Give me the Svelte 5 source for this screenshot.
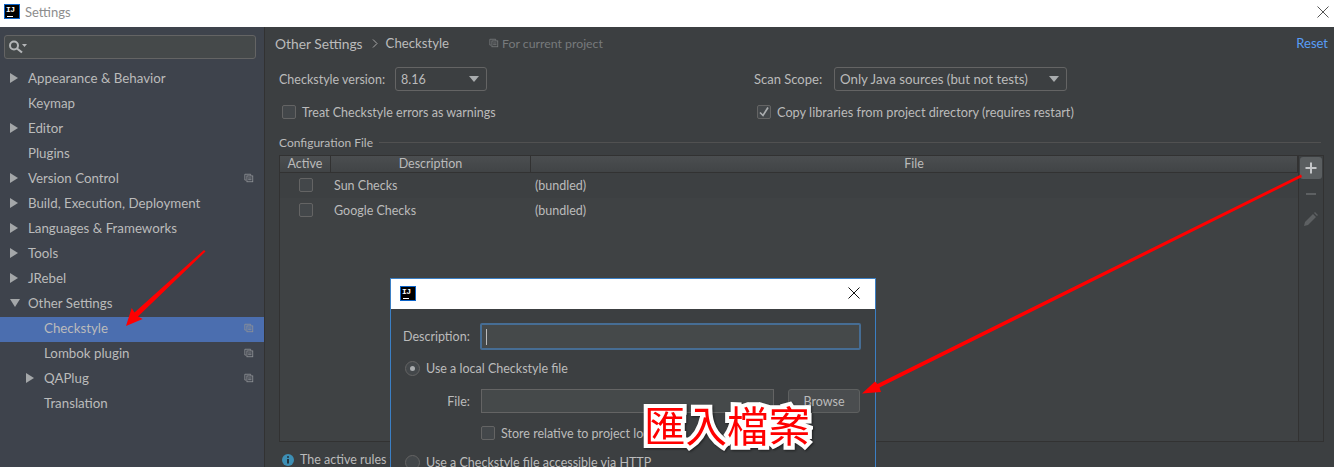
<script>
  // Settings window with the Checkstyle page, the "add file" dialog on top and the red annotations.
  const tree = [
    { label: 'Appearance & Behavior', arrow: 'right' },
    { label: 'Keymap' },
    { label: 'Editor', arrow: 'right' },
    { label: 'Plugins' },
    { label: 'Version Control', arrow: 'right', copy: true },
    { label: 'Build, Execution, Deployment', arrow: 'right' },
    { label: 'Languages & Frameworks', arrow: 'right' },
    { label: 'Tools', arrow: 'right' },
    { label: 'JRebel', arrow: 'right' },
    { label: 'Other Settings', arrow: 'down' },
    { label: 'Checkstyle', child: true, copy: true, selected: true },
    { label: 'Lombok plugin', child: true, copy: true },
    { label: 'QAPlug', child: true, arrow: 'right', copy: true },
    { label: 'Translation', child: true }
  ];
  const rules = [
    { name: 'Sun Checks', file: '(bundled)' },
    { name: 'Google Checks', file: '(bundled)' }
  ];
</script>

{#snippet logo()}
  <span class="logo"><span class="logo-text">IJ</span><i></i></span>
{/snippet}

{#snippet copyIcon()}
  <svg class="copy" width="10" height="10" viewBox="0 0 12 12" fill="none" stroke="currentColor">
    <path d="M2.5 8.5h-1.5v-7h7v1.5" />
    <rect x="3.5" y="3.5" width="7" height="7" />
    <path d="M5 6h4M5 8h4" />
  </svg>
{/snippet}

{#snippet caret()}
  <svg class="caret" width="10" height="6" viewBox="0 0 10 6"><path d="M0 0h10L5 6z" fill="#a9acae" /></svg>
{/snippet}

<div class="window">
  <header class="titlebar">
    {@render logo()}
    <span class="title">Settings</span>
    <svg class="close main-close" width="12" height="12" viewBox="0 0 12 12"><path d="M.5.5l11 11M11.5.5l-11 11" stroke="#555" fill="none" /></svg>
  </header>

  <div class="body">
    <aside class="sidebar">
      <div class="search">
        <svg width="18" height="14" viewBox="0 0 18 14" fill="none">
          <circle cx="5" cy="5.5" r="4" stroke="#b4b6b8" stroke-width="2" />
          <path d="M8 8.5l5 4" stroke="#b4b6b8" stroke-width="2.2" />
          <path d="M13 4h5l-2.500 3z" fill="#b4b6b8" />
        </svg>
      </div>
      <ul class="tree">
        {#each tree as item}
          <li class:selected={item.selected} class:child={item.child}>
            <span class="arrow-slot">
              {#if item.arrow === 'right'}
                <svg width="9" height="10" viewBox="0 0 9 10"><path d="M0 0l8 5-8 5z" fill="#a4a7a9" /></svg>
              {:else if item.arrow === 'down'}
                <svg width="10" height="9" viewBox="0 0 10 9"><path d="M0 0h10L5 8z" fill="#a4a7a9" /></svg>
              {/if}
            </span>
            <span class="tree-label">{item.label}</span>
            {#if item.copy}{@render copyIcon()}{/if}
          </li>
        {/each}
      </ul>
    </aside>

    <main class="page">
      <div class="crumbs">
        <span>Other Settings</span>
        <svg width="6" height="9" viewBox="0 0 6 9" fill="none"><path d="M1 .5l4 4-4 4" stroke="#a8a8a8" /></svg>
        <span class="crumb-last">Checkstyle</span>
        <span class="scope">{@render copyIcon()}For current project</span>
        <span class="reset">Reset</span>
      </div>

      <div class="options">
        <div class="field">
          <span class="field-label">Checkstyle version:</span>
          <div class="combo version">8.16{@render caret()}</div>
        </div>
        <div class="field scan">
          <span class="field-label">Scan Scope:</span>
          <div class="combo scan-combo">Only Java sources (but not tests){@render caret()}</div>
        </div>
        <label class="check first"><span class="box"></span>Treat Checkstyle errors as warnings</label>
        <label class="check copy-libs">
          <span class="box">
            <svg width="12" height="12" viewBox="0 0 12 12" fill="none"><path d="M2 6.500l3 3 5-8" stroke="#a9acae" stroke-width="1.700" /></svg>
          </span>
          Copy libraries from project directory (requires restart)
        </label>
      </div>

      <div class="legend"><span>Configuration File</span><i></i></div>

      <div class="table-wrap">
        <div class="table">
          <div class="table-head">
            <span class="col-active">Active</span>
            <span class="col-desc">Description</span>
            <span class="col-file">File</span>
          </div>
          {#each rules as rule, i}
            <div class="table-row" class:alt={i % 2 === 1}>
              <span class="cell-check"><span class="box"></span></span>
              <span class="cell-name">{rule.name}</span>
              <span>{rule.file}</span>
            </div>
          {/each}
        </div>
        <div class="tools">
          <span class="tool active">
            <svg width="12" height="12" viewBox="0 0 12 12"><path d="M6 .5v11M.5 6h11" stroke="#c4c6c8" stroke-width="2" /></svg>
          </span>
          <span class="tool">
            <svg width="12" height="12" viewBox="0 0 12 12"><path d="M1 6h10" stroke="#5d6062" stroke-width="2" /></svg>
          </span>
          <span class="tool">
            <svg width="14" height="14" viewBox="0 0 14 14"><path d="M0 14l1-4 8-8 3 3-8 8zM10 1l1-1 3 3-1 1z" fill="#5d6062" /></svg>
          </span>
        </div>
      </div>

      <div class="info">
        <svg width="12" height="12" viewBox="0 0 12 12">
          <circle cx="6" cy="6" r="6" fill="#3d8fb5" />
          <path d="M6 5v4.500M6 2.200v1.600" stroke="#23333c" stroke-width="2" />
        </svg>
        The active rules file
      </div>
    </main>
  </div>

  <section class="dialog">
    <div class="dialog-title">
      {@render logo()}
      <svg class="close" width="12" height="12" viewBox="0 0 12 12"><path d="M.5.5l11 11M11.5.5l-11 11" stroke="#111" fill="none" /></svg>
    </div>
    <div class="dialog-body">
      <div class="desc-row">
        <span class="desc-label">Description:</span>
        <div class="text-input focused"><i class="cursor"></i></div>
      </div>
      <div class="radio-row"><span class="radio on"></span>Use a local Checkstyle file</div>
      <div class="file-row">
        <span class="file-label">File:</span>
        <div class="text-input file"></div>
        <div class="browse">Browse</div>
      </div>
      <label class="check relative"><span class="box"></span>Store relative to project location</label>
      <div class="radio-row http"><span class="radio"></span>Use a Checkstyle file accessible via HTTP</div>
    </div>
  </section>

  <svg class="marks" width="1334" height="467" viewBox="0 0 1334 467">
    <path d="M204 250l1.500 1.500L138 316.500 142.700 319 126 326 131.700 308 134.500 312.500z" fill="#f00" />
    <path d="M1301 174.500l1 2.500L879.500 387.500 881 392 862 393.500 875 381.500 877.500 384z" fill="#f00" />
  </svg>
  <div class="callout">匯入檔案</div>
</div>

<style>
  :global(body) { margin: 0; background: #3c3f41; }
  .window {
    position: relative; width: 1334px; height: 467px; overflow: hidden;
    font-family: Lato, "Open Sans", sans-serif; font-size: 12.5px; color: #bbbbbb;
  }

  .titlebar {
    height: 27px; background: #fff; display: flex; align-items: center; padding: 0 0 4px 4px; gap: 5px;
    box-sizing: border-box;
  }
  .title { color: #8d8d8d; font-size: 13px; }
  .logo {
    position: relative; display: block; width: 16px; height: 15px; flex: none; background: #000;
    outline: 1px solid #0b63c9; outline-offset: -1px; overflow: hidden;
  }
  .logo-text {
    position: absolute; left: 2px; top: 2px; font: bold 8px/7px "Liberation Mono", monospace; letter-spacing: -0.5px; color: #fff;
  }
  .logo i { position: absolute; left: 3px; top: 12px; width: 6px; height: 1px; background: #fff; }
  .close { flex: none; margin-left: auto; }
  .main-close { margin-right: 5px; }

  .body { display: flex; height: 440px; }
  .sidebar {
    width: 264px; flex: none; background: #3e434c; border-right: 1px solid #323232;
    box-sizing: content-box; padding-top: 8px; font-size: 13.300px;
  }
  .search {
    height: 22px; margin: 0 8px 0 4px; background: #45494a; border: 1px solid #646464; border-radius: 3px;
    display: flex; align-items: center; padding-left: 4px;
  }
  .tree { list-style: none; margin: 8px 0 0; padding: 0; }
  .tree li { height: 25px; display: flex; align-items: center; padding: 0 10px 3px 10px; box-sizing: border-box; color: #bbbbbb; }
  .tree li.child { padding-left: 26px; }
  .tree li.selected { background: #4b6eaf; }
  .arrow-slot { width: 18px; flex: none; display: flex; align-items: center; }
  .tree-label { flex: 1; }
  .copy { color: #8f9296; flex: none; }

  .page { flex: 1; min-width: 0; display: flex; flex-direction: column; padding: 0 10px 0 14px; }
  .crumbs { height: 33px; display: flex; align-items: center; font-size: 13.800px; flex: none; margin: 0 -4px 0 -4px; padding-bottom: 1px; box-sizing: border-box; }
  .crumbs svg { margin: 0 8px 0 9px; }
  .crumb-last { font-size: 13.200px; }
  .crumbs .copy { margin: 0 3px 0 0; color: #777a7c; }
  .scope { display: flex; align-items: center; margin-left: 40px; color: #777a7c; font-size: 12.300px; }
  .reset { margin-left: auto; color: #589df6; font-size: 13px; }

  .options {
    display: grid; grid-template-columns: 475px 1fr; row-gap: 13px; flex: none; padding-top: 7px;
  }
  .field { display: flex; align-items: center; }
  .field-label { width: 116px; flex: none; }
  .scan .field-label { width: 80px; font-size: 13px; }
  .combo {
    height: 22px; border: 1px solid #646464; border-radius: 3px; background: #3c3f41;
    display: flex; align-items: center; justify-content: space-between; padding: 0 7px 0 5px;
  }
  .scan-combo { font-size: 13.300px; width: 219px; }
  .version { width: 78px; }
  .check { display: flex; align-items: center; gap: 6px; padding-left: 3px; height: 16px; }
  .copy-libs { font-size: 12.750px; }
  .box {
    width: 12px; height: 12px; flex: none; border: 1px solid #646464; border-radius: 2px; background: #43474a;
    display: flex; align-items: center; justify-content: center;
  }

  .legend { display: flex; align-items: center; gap: 6px; margin-top: 14px; height: 16px; flex: none; font-size: 12px; }
  .legend i { flex: 1; height: 1px; background: #515151; margin-right: 3px; }

  .table-wrap {
    display: flex; margin-top: 5px; height: 287px; flex: none; border: 1px solid #323232;
    box-sizing: border-box;
  }
  .table { flex: 1; min-width: 0; background: #3f4244; }
  .table-head {
    display: flex; height: 16px; background: linear-gradient(#4b4e50, #414446);
    border-bottom: 1px solid #323232;
  }
  .table-head span { text-align: center; line-height: 16px; border-right: 1px solid #323232; box-sizing: border-box; }
  .col-active { width: 51px; }
  .col-desc { width: 200px; }
  .col-file { flex: 1; border-right: 0; }
  .table-row { display: flex; align-items: center; height: 25px; padding-bottom: 1px; box-sizing: border-box; background: #3d4042; }
  .table-row.alt { background: #3f4244; }
  .cell-check { width: 54px; display: flex; flex: none; box-sizing: border-box; padding-left: 19px; }
  .cell-name { width: 201px; flex: none; }
  .tools {
    width: 24px; flex: none; display: flex; flex-direction: column; align-items: center; gap: 3px;
    border-left: 1px solid #323232; padding-top: 1px;
  }
  .tool { width: 22px; height: 22px; display: flex; align-items: center; justify-content: center; border-radius: 3px; }
  .tool.active { background: #5a5e60; margin-bottom: 1px; }

  .info { display: flex; align-items: center; gap: 6px; padding: 10px 0 0 3px; }

  .dialog {
    position: absolute; left: 390px; top: 278px; width: 486px; height: 200px; box-sizing: border-box;
    border: 1px solid #3b7fc4; background: #3c3f41;
  }
  .dialog-title {
    height: 30px; background: #fff; display: flex; align-items: center; padding: 0 15px 2px 9px; box-sizing: border-box;
  }
  .dialog-body { padding-top: 14px; }
  .desc-row { display: flex; align-items: center; padding-left: 12px; }
  .desc-label { width: 77px; flex: none; }
  .text-input { height: 24px; background: #45494a; border: 1px solid #646464; box-sizing: border-box; }
  .focused {
    width: 381px; height: 27px; border: 2px solid #466d94; border-radius: 2px;
    display: flex; align-items: center; padding-left: 4px;
  }
  .cursor { width: 1px; height: 16px; background: #bbb; }
  .radio-row { display: flex; align-items: center; gap: 6px; padding-left: 14px; height: 16px; margin-top: 10px; }
  .radio {
    width: 13px; height: 13px; flex: none; border: 1px solid #646464; border-radius: 50%; background: #43474a;
    display: flex; align-items: center; justify-content: center;
  }
  .radio.on::after { content: ''; width: 5px; height: 5px; border-radius: 50%; background: #a9acae; }
  .file-row { display: flex; align-items: center; margin-top: 13px; height: 24px; }
  .file-label { width: 90px; text-align: right; box-sizing: border-box; padding-right: 11px; flex: none; }
  .file { width: 293px; }
  .browse {
    width: 72px; height: 24px; margin-left: 14px; box-sizing: border-box; border: 1px solid #5e6060; border-radius: 3px;
    background: #4a4d4f; display: flex; align-items: center; justify-content: center;
  }
  .relative { margin: 12px 0 0 90px; padding-left: 0; }
  .http { margin-top: 13px; }

  .marks { position: absolute; left: 0; top: 0; pointer-events: none; }
  .callout {
    position: absolute; left: 644px; top: 396px;
    font-family: "Noto Sans CJK TC", sans-serif; font-size: 41.500px; line-height: 56px; font-weight: 400;
    color: #f00; -webkit-text-stroke: 8px #fff; paint-order: stroke fill; white-space: nowrap;
    filter: drop-shadow(1px 1px 1px rgba(0, 0, 0, 0.5));
  }
</style>
